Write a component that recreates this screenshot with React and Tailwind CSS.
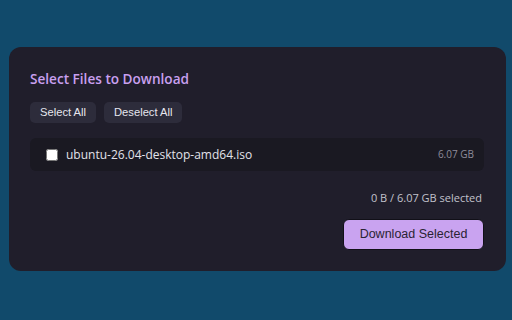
import React, { useState } from "react";

export default function App() {
  const [checked, setChecked] = useState(false);

  return (
    <div className="w-[512px] h-[320px] bg-[#114a6b] px-[9px] pt-[47px] font-['Open_Sans',sans-serif]">
      <div className="w-[497px] h-[224px] bg-[#201e2b] rounded-[12px] px-[21px] pt-[22px] flex flex-col">
        {/* Title */}
        <h2 className="text-[13.6px] leading-[20px] font-semibold text-[#c9a0f0]">Select Files to Download</h2>

        {/* Buttons */}
        <div className="flex gap-[8px] mt-[13px]">
          <button className="h-[21px] px-[10px] rounded-[5px] bg-[#2d2c3b] text-[#e6e6ee] text-[11.2px] font-['Liberation_Sans',sans-serif]">
            Select All
          </button>
          <button className="h-[21px] px-[10px] rounded-[5px] bg-[#2d2c3b] text-[#e6e6ee] text-[11.2px] font-['Liberation_Sans',sans-serif]">
            Deselect All
          </button>
        </div>

        {/* File row */}
        <div className="mt-[15px] h-[33px] w-[454px] rounded-[6px] bg-[#1a1922] flex items-center pl-[16px] pr-[10px]">
          <input
            type="checkbox"
            checked={checked}
            onChange={() => setChecked(!checked)}
            className="w-[12px] h-[12px] m-0 accent-[#c9a3f0]"
          />
          <span className="ml-[8px] text-[12px] text-[#e2e2ea]">ubuntu-26.04-desktop-amd64.iso</span>
          <span className="ml-auto text-[10px] text-[#8e8c9a]">6.07 GB</span>
        </div>

        {/* Summary */}
        <div className="mt-[19px] w-[452px] text-right text-[11px] text-[#c2c2cc]">
          {checked ? "6.07 GB" : "0 B"} / 6.07 GB selected
        </div>

        <div className="mt-[12px] w-[454px] flex justify-end">
          <button className="h-[31px] w-[141px] rounded-[6px] bg-[#c9a3f0] border border-[#111018] text-[#2a2333] text-[12.5px] font-['Liberation_Sans',sans-serif]">
            Download Selected
          </button>
        </div>
      </div>
    </div>
  );
}
